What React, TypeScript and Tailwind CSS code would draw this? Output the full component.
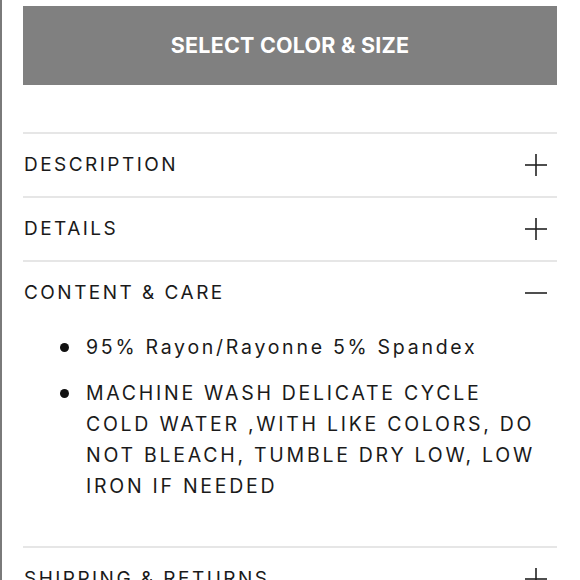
import React from "react";

const PlusIcon = ({ open }: { open?: boolean }) => (
  <svg width="24" height="24" viewBox="0 0 24 24" className="text-[#222]">
    <line x1="1" y1="12" x2="23" y2="12" stroke="currentColor" strokeWidth="1.6" />
    {!open && <line x1="12" y1="1" x2="12" y2="23" stroke="currentColor" strokeWidth="1.6" />}
  </svg>
);

const Row = ({ title, open }: { title: string; open?: boolean }) => (
  <div className="flex h-[62px] items-center justify-between">
    <span className="pl-[1px] text-[19px] tracking-[0.13em] text-[#1a1a1a]">{title}</span>
    <div className="mr-[9px]">
      <PlusIcon open={open} />
    </div>
  </div>
);

export default function App() {
  return (
    <div
      className="h-[580px] w-[580px] overflow-hidden border-l-2 border-[#7a7a7a] bg-white"
      style={{ fontFamily: "Inter, 'Open Sans', sans-serif" }}
    >
      <div className="pl-[21px] pr-[23px] pt-[6px]">
        <button className="flex h-[79px] w-full items-center justify-center bg-[#808080] text-[21.5px] font-bold tracking-[0.01em] text-white">
          SELECT COLOR &amp; SIZE
        </button>

        <div className="mt-[47px] border-t-2 border-[#e6e6e6]">
          <Row title="DESCRIPTION" />
        </div>
        <div className="border-t-2 border-[#e6e6e6]">
          <Row title="DETAILS" />
        </div>
        <div className="border-t-2 border-[#e6e6e6]">
          <Row title="CONTENT & CARE" open />
          <ul className="mt-[8px] flex flex-col gap-[15px] pb-[44px] text-[19.5px] leading-[31px] tracking-[0.14em] text-[#1a1a1a]">
            <li className="flex">
              <span className="ml-[37px] mr-[17px] mt-[11px] h-[9px] w-[9px] shrink-0 rounded-full bg-[#111]" />
              <span>95% Rayon/Rayonne 5% Spandex</span>
            </li>
            <li className="flex">
              <span className="ml-[37px] mr-[17px] mt-[11px] h-[9px] w-[9px] shrink-0 rounded-full bg-[#111]" />
              <span className="pr-[10px]">
                MACHINE WASH DELICATE CYCLE COLD WATER ,WITH LIKE COLORS, DO NOT BLEACH, TUMBLE DRY LOW, LOW IRON IF NEEDED
              </span>
            </li>
          </ul>
        </div>
        <div className="border-t-2 border-[#e6e6e6]">
          <Row title="SHIPPING & RETURNS" />
        </div>
      </div>
    </div>
  );
}
